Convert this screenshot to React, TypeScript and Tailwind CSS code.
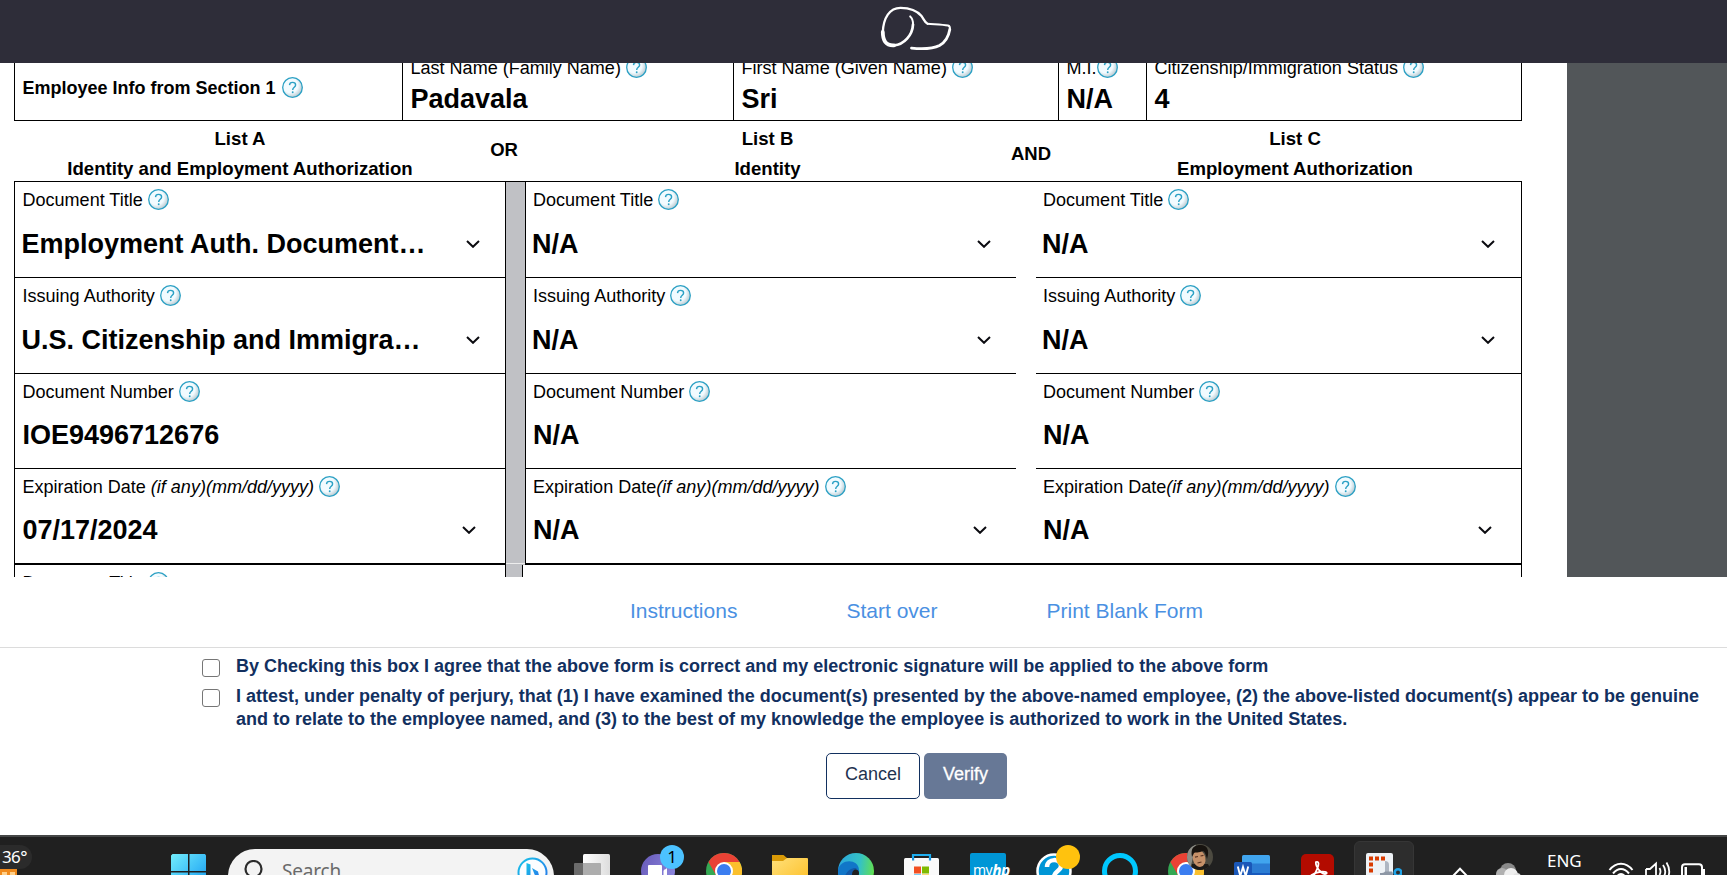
import React from "react";

const label = "text-[18.050px] leading-6 whitespace-pre";
const value = "text-[27px] font-bold leading-8 whitespace-pre";

function Help({ className = "" }: { className?: string }) {
  return (
    <svg className={`h-[21px] w-[21px] shrink-0 ${className}`} viewBox="0 0 21 21">
      <defs>
        <radialGradient id="helpFill" cx="0.4" cy="0.4" r="0.62">
          <stop offset="0.6" stopColor="#f2fbff" />
          <stop offset="1" stopColor="#b9c9d0" />
        </radialGradient>
      </defs>
      <circle cx="10.5" cy="10.5" r="9.8" fill="url(#helpFill)" stroke="#2ba0c4" strokeWidth="1.3" />
      <path d="M7.5 8.1c.1-1.7 1.300-2.700 3-2.700s3.100 1 3.100 2.600c0 2.200-2.900 2.300-2.900 4.900" fill="none" stroke="#2ba0c4" strokeWidth="1.400" />
      <circle cx="10.700" cy="15.300" r="0.95" fill="#2ba0c4" />
    </svg>
  );
}

function Chevron({ className = "" }: { className?: string }) {
  return (
    <svg className={`h-2 w-[14px] shrink-0 ${className}`} viewBox="0 0 14 8">
      <path d="M1 1l6 5.800L13 1" fill="none" stroke="#0b0b10" strokeWidth="2" />
    </svg>
  );
}

type FieldProps = {
  title: React.ReactNode;
  text?: string;
  size: string;
  arrow?: string;
  select?: boolean;
};

function Field({ title, text, size, arrow, select }: FieldProps) {
  return (
    <div className={`flex flex-col overflow-hidden border-black pt-[6px] ${size}`}>
      <div className={`flex shrink-0 items-center ${label}`}>
        <span>{title}</span>
        <Help className="ml-[5px] -mt-px" />
      </div>
      {text && (
        <div className={`flex items-center justify-between ${select ? "mt-4" : "mt-[15px]"}`}>
          <span className={`${value} ${select ? "-ml-px" : ""}`}>{text}</span>
          {arrow && <Chevron className={arrow} />}
        </div>
      )}
    </div>
  );
}

function InfoCell({ name, text, size, gap }: { name: string; text: string; size: string; gap: string }) {
  return (
    <div className={`flex flex-col justify-end border-r border-black pb-[5px] pl-[7.500px] ${size}`}>
      <div className={`flex items-center ${label}`}>
        <span>{name}</span>
        <Help className={`-mt-px ${gap}`} />
      </div>
      <div className={`mt-[3px] ${value}`}>{text}</div>
    </div>
  );
}

function ListHead({ top, bottom, size }: { top: string; bottom: string; size: string }) {
  return (
    <div className={`flex flex-col gap-[6px] pt-[6px] text-center text-[18.600px] leading-6 ${size}`}>
      <div>{top}</div>
      <div>{bottom}</div>
    </div>
  );
}

function ChromeIcon({ className }: { className: string }) {
  return (
    <svg className={`h-9 w-9 shrink-0 ${className}`} viewBox="0 0 36 36">
      <circle cx="18" cy="18" r="18" fill="#34a853" />
      <path d="M2.400 9A18 18 0 0 1 33.600 9H18L10.200 22.500z" fill="#e94235" />
      <path d="M33.600 9A18 18 0 0 1 18 36l7.800-13.500L18 9z" fill="#fbc02d" />
      <circle cx="18" cy="18" r="9" fill="#fff" />
      <circle cx="18" cy="18" r="7" fill="#3b7df0" />
    </svg>
  );
}

function Taskbar() {
  return (
    <div className="flex h-10 items-start overflow-hidden border-t-2 border-[#454747] bg-[#202020] font-['Noto_Sans',sans-serif]">
      <div className="relative mt-2 h-8 w-[33px] shrink-0">
        <svg className="absolute top-[23px] left-0 h-2 w-[18px]" viewBox="0 0 18 8">
          <path d="M0 0h17v8H0z" fill="#f08a1c" />
          <path d="M2 4h5v4H2zM10 4h5v4h-5z" fill="#ffd08a" />
        </svg>
        <div className="absolute top-0 left-0 h-6 w-8 rounded-r-full bg-[#2b2b2b] pl-[2px] text-[17px] leading-6 tracking-[-0.600px] text-white">36°</div>
      </div>
      <svg className="mt-[17px] ml-[138px] h-9 w-[35px] shrink-0" viewBox="0 0 35 36">
        <defs>
          <linearGradient id="win" x1="0" y1="0" x2="1" y2="1">
            <stop stopColor="#73eefc" />
            <stop offset="0.600" stopColor="#37b9f6" />
            <stop offset="1" stopColor="#1090e0" />
          </linearGradient>
        </defs>
        <path d="M1.500 0H17v17H0V1.500zM18.500 0H34l1 1.500V17H18.500zM0 18.500h17V36H0zM18.500 18.500H35V36H18.500z" fill="url(#win)" />
      </svg>
      <div className="mt-3 ml-[22px] flex h-[54px] w-[326px] shrink-0 items-start rounded-full bg-[#f3f3f3]">
        <svg className="mt-[11px] ml-4 h-6 w-6" viewBox="0 0 24 24">
          <circle cx="9.500" cy="9" r="8" fill="none" stroke="#2b2b2b" strokeWidth="2.200" />
        </svg>
        <span className="mt-[7px] ml-[14px] text-[19px] leading-[30px] tracking-[-0.200px] text-[#6a6a6a]">Search</span>
        <svg className="mt-2 mr-[6px] ml-auto h-[31px] w-[31px]" viewBox="0 0 31 31">
          <defs>
            <linearGradient id="bing" x1="0" y1="0" x2="1" y2="1">
              <stop stopColor="#18c3e8" />
              <stop offset="1" stopColor="#2870ea" />
            </linearGradient>
          </defs>
          <circle cx="15.500" cy="15.500" r="14" fill="#fbfdff" stroke="url(#bing)" strokeWidth="2" />
          <path d="M9.500 6l4 1.500V22l-4 3zM15 11l6 3.500 1 4-4 0z" fill="url(#bing)" />
        </svg>
      </div>
      <svg className="mt-[17px] ml-5 h-7 w-9 shrink-0" viewBox="0 0 36 28">
        <defs>
          <linearGradient id="pane"><stop stopColor="#fff" /><stop offset="1" stopColor="#ddd" /></linearGradient>
        </defs>
        <rect x="9" width="27" height="34" rx="1.500" fill="url(#pane)" />
        <path d="M0 10q0-1 1-1h8v25H0z" fill="#6b6b6b" />
        <path d="M9 9h17q1 0 1 1v24H9z" fill="#adadad" />
      </svg>
      <div className="relative mt-2 ml-[31px] h-8 w-[43px] shrink-0">
        <svg className="absolute top-2 left-0 h-[34px] w-[34px]" viewBox="0 0 34 34">
          <defs>
            <linearGradient id="chat" x1="0" y1="0" x2="1" y2="0.500"><stop stopColor="#6659b8" /><stop offset="1" stopColor="#8b84dc" /></linearGradient>
          </defs>
          <circle cx="17" cy="18" r="17" fill="url(#chat)" />
          <rect x="7" y="12" width="14" height="14" rx="1" fill="#fff" />
          <path d="M22.500 18q0-1.500 2.500-2l1-1v11h-3.500z" fill="#fff" />
        </svg>
        <div className="absolute top-0 left-[19px] h-6 w-6 rounded-full bg-[#4cc2ff] text-center text-[17px] leading-6 text-black">1</div>
      </div>
      <ChromeIcon className="mt-4 ml-[22px]" />
      <svg className="mt-[18px] ml-[30px] h-8 w-9 shrink-0" viewBox="0 0 36 32">
        <defs>
          <linearGradient id="folder" x1="0" y1="0" x2="1" y2="1"><stop stopColor="#ffe07a" /><stop offset="1" stopColor="#fdbd21" /></linearGradient>
        </defs>
        <path d="M0 0h11.500l3.500 3v8H0z" fill="#d99a06" />
        <path d="M0 6h11l4-3h20q1 0 1 1v28H0z" fill="url(#folder)" />
      </svg>
      <svg className="mt-4 ml-[30px] h-9 w-9 shrink-0" viewBox="0 0 36 36">
        <defs>
          <linearGradient id="edge" x1="0" y1="0.400" x2="1" y2="0.500"><stop stopColor="#2ba7dd" /><stop offset="0.600" stopColor="#35c2c4" /><stop offset="1" stopColor="#63e04f" /></linearGradient>
        </defs>
        <circle cx="18" cy="18" r="18" fill="url(#edge)" />
        <path d="M0 17C2 6 20 5 21 17v19H6C2 31 0 24 0 17z" fill="#1176c8" />
        <path d="M5 36c-1-14 6-22 14-21-5 3-7 12-3 21z" fill="#1458a6" />
        <path d="M14 22c0-7 7-7 7-2 0 3-2 4 0 6h-5z" fill="#202020" />
      </svg>
      <svg className="mt-[17px] ml-[30px] h-9 w-[35px] shrink-0" viewBox="0 0 35 36">
        <path d="M9 6V1h17v5" fill="none" stroke="#1eaef0" strokeWidth="2.200" />
        <path d="M0 5.500Q0 4 1.500 4h32Q35 4 35 5.500V36H0z" fill="#fafafa" />
        <path d="M8 4h2.200v2.500H8zM24.900 4h2.200v2.500h-2.200z" fill="#1490df" />
        <path d="M10 12.500h7v7h-7z" fill="#f25022" />
        <path d="M18 12.500h7v7h-7z" fill="#7fba00" />
        <path d="M10 20.500h7v7h-7z" fill="#00a4ef" />
        <path d="M18 20.500h7v7h-7z" fill="#ffb900" />
      </svg>
      <div className="mt-4 ml-[31px] flex h-9 w-9 shrink-0 items-start rounded-[2px] bg-[#0096d6] pt-[7px] pl-[3px] text-[14px] leading-5 tracking-[-0.500px] text-white">
        my<b className="text-[15.500px] italic">hp</b>
      </div>
      <div className="relative mt-2 ml-[30px] h-8 w-[44px] shrink-0">
        <svg className="absolute top-2 left-0 h-9 w-9" viewBox="0 0 36 36">
          <circle cx="18" cy="18" r="16.500" fill="#0096d6" stroke="#fff" strokeWidth="2.500" />
          <path d="M11 14c0-9 14-9 14-1 0 5-7 5-7 11" fill="none" stroke="#fff" strokeWidth="4.500" />
        </svg>
        <div className="absolute top-0 left-5 h-6 w-6 rounded-full bg-[#ffc20e]" />
      </div>
      <div className="mt-4 ml-[22px] h-9 w-9 shrink-0 rounded-full border-[5px] border-[#00c8ff]" />
      <div className="relative mt-2 ml-[30px] h-8 w-[45px] shrink-0">
        <ChromeIcon className="absolute top-2 left-0" />
        <svg className="absolute -top-px left-[19px] h-[26px] w-[26px]" viewBox="0 0 26 26">
          <clipPath id="face"><circle cx="13" cy="13" r="13" /></clipPath>
          <g clipPath="url(#face)">
            <path d="M0 0h26v26H0z" fill="#4c4a40" />
            <path d="M0 0h9L3 26H0z" fill="#8f8f88" />
            <path d="M5 20h16l3 6H4z" fill="#1c1a18" />
            <ellipse cx="12" cy="14.500" rx="6.300" ry="8.500" fill="#c69169" transform="rotate(-12 12 14)" />
            <path d="M5 13C3 3 8 1 14 1s9 5 6 14c-1-4-2-7-4-8-4 2-8 1-9 2z" fill="#17130f" />
            <path d="M8 13.200l3-.700M13.500 12l3-.700M10.500 19l4-1" stroke="#5b3322" strokeWidth="1.200" />
          </g>
        </svg>
      </div>
      <svg className="mt-[18px] ml-[21px] h-8 w-9 shrink-0" viewBox="0 0 36 32">
        <path d="M8 1.500Q8 0 9.500 0h25Q36 0 36 1.500V9H8z" fill="#41a5ee" />
        <path d="M8 8.500h28V18H8z" fill="#2b7cd3" />
        <path d="M8 18h28v14H8z" fill="#185abd" />
        <rect y="7" width="18" height="18" rx="1.500" fill="#1a57b8" />
        <path d="M3.800 11.500L6.300 21 9 12l2.700 9 2.500-9.500" fill="none" stroke="#fff" strokeWidth="1.900" />
      </svg>
      <svg className="mt-[17px] ml-[31px] h-8 w-[33px] shrink-0" viewBox="0 0 33 32">
        <rect width="33" height="33" rx="5" fill="#b30b00" />
        <path d="M15 8c3-1 3 2 1.500 6C14.500 19 12 24 9.500 24c-3-1 3-5 9-6 4-.700 8 0 7 1.500-3 2-8-3-10-7.500-.700-2-.700-3.500-.500-4z" fill="none" stroke="#fff" strokeWidth="1.800" />
      </svg>
      <div className="mt-1 ml-5 flex h-[60px] w-[60px] shrink-0 rounded-[6px] border border-[#363636] bg-[#2d2d2d] pt-[11px] pl-[11px]">
        <svg className="h-9 w-9" viewBox="0 0 36 36">
          <rect width="27" height="34" rx="2" fill="#eef2f6" />
          <path d="M3 3.500h4v4H3zM9 3.500h4v4H9zM15 3.500h4v4h-4zM3 9.500h4v4H3zM3 15.500h4v4H3z" fill="#d83b01" />
          <path d="M19 20V8q4 0 4 4v10h-4z" fill="#aeb6c2" />
          <path d="M14 20q4 0 5-1.500h7q1 1 1 4H14z" fill="#8d97a5" />
          <circle cx="32" cy="19.500" r="3.300" fill="none" stroke="#1fa3e8" strokeWidth="2.600" />
        </svg>
      </div>
      <svg className="mt-[30px] ml-[37px] h-3 w-[18px] shrink-0" viewBox="0 0 18 12">
        <path d="M1.500 9.500L9 1.800l7.500 7.700" fill="none" stroke="#fff" strokeWidth="2" />
      </svg>
      <svg className="mt-[26px] ml-[27px] h-4 w-[25px] shrink-0" viewBox="0 0 25 16">
        <circle cx="12" cy="8" r="8" fill="#8a8a8a" />
        <circle cx="6" cy="11" r="6" fill="#b0b0b0" />
        <circle cx="15" cy="12" r="7" fill="#eee" />
        <circle cx="21" cy="14" r="4" fill="#e2e2e2" />
      </svg>
      <span className="mt-[12px] ml-[26px] w-9 shrink-0 text-[17px] leading-6 text-white">ENG</span>
      <svg className="mt-[24px] ml-[25px] h-5 w-[26px] shrink-0" viewBox="0 0 26 20" fill="none" stroke="#fff" strokeWidth="2">
        <path d="M1.500 9C8 .500 18 .500 24.500 9M5 12.500c5-6 11-6 16 0M8.500 16c3-4 6-4 9 0" />
      </svg>
      <svg className="mt-[23px] ml-[11px] h-5 w-[26px] shrink-0" viewBox="0 0 26 20" fill="none" stroke="#fff" strokeWidth="1.800">
        <path d="M1 9h4l6-5.500V22M1 9v8M14.500 8q2 3.500 0 7M18 5q4.500 6.500 0 13M21.500 2.500q5.500 9 0 18" />
      </svg>
      <svg className="mt-[26px] ml-[10px] h-5 w-[26px] shrink-0" viewBox="0 0 26 20">
        <rect x="1" y="1.200" width="20" height="15" rx="3" fill="none" stroke="#fff" strokeWidth="2" />
        <path d="M3.500 4H6v12H3.500zM22 6h2v6h-2z" fill="#fff" />
      </svg>
    </div>
  );
}

export default function App() {
  const anyDate = <i>(if any)(mm/dd/yyyy)</i>;
  return (
    <div className="flex h-[875px] w-[1727px] flex-col overflow-hidden bg-white font-['Liberation_Sans',Arial,sans-serif] text-black">
      <header className="flex h-[63px] shrink-0 bg-[#2e2d39] pl-[880px]">
        <svg className="h-[63px] w-[72px]" viewBox="0 0 72 63" fill="none" stroke="#fff" strokeLinecap="round" strokeLinejoin="round">
          <path strokeWidth="2.300" d="M2.800 32C3.500 18 9.500 7.800 20.500 7.800C29 7.800 37 10.500 41.500 16C43.800 19 44.500 22.500 47.500 23.700" />
          <path strokeWidth="3.800" d="M2.800 32C2.800 40 5.500 45.800 14 45.300" />
          <path strokeWidth="2.700" d="M14 45.300C24 45 32.500 35 33 24.500" />
          <path strokeWidth="2" d="M33 24.500C33.200 20.500 32 18 30.200 16.400" />
          <path strokeWidth="1.900" d="M47.500 23.700C54 24.300 62 24.500 68 25.500C70.300 26 70.200 27.500 69.800 29.500" />
          <path strokeWidth="2.800" d="M69.800 29.500C68.500 37 65 42.500 59.500 45.500C51 49.800 40 49 31.500 48.200" />
        </svg>
      </header>

      <main className="flex h-[514px] shrink-0 overflow-hidden">
        <div className="flex w-[1567px] shrink-0 flex-col pl-[14px]">
          <section className="flex h-[58px] w-[1508px] shrink-0 overflow-hidden border-b border-l border-black">
            <div className="flex w-[388px] items-start border-r border-black pt-[13px] pl-[7.500px] text-[18px] leading-6 font-bold">
              <span>Employee Info from Section 1</span>
              <Help className="mt-[1px] ml-[6px]" />
            </div>
            <InfoCell name="Last Name (Family Name)" text="Padavala" size="w-[331px]" gap="ml-[5px]" />
            <InfoCell name="First Name (Given Name)" text="Sri" size="w-[325px]" gap="ml-[5px]" />
            <InfoCell name="M.I." text="N/A" size="w-[88px]" gap="ml-0" />
            <InfoCell name="Citizenship/Immigration Status" text="4" size="w-[375px]" gap="ml-[5px]" />
          </section>

          <section className="flex h-[60px] w-[1508px] shrink-0 font-bold">
            <ListHead top="List A" bottom="Identity and Employment Authorization" size="w-[452px]" />
            <div className="w-[76px] pt-[17px] text-center text-[18.500px] leading-6">OR</div>
            <ListHead top="List B" bottom="Identity" size="w-[451px]" />
            <div className="w-[76px] pt-[21px] text-center text-[18.500px] leading-6">AND</div>
            <ListHead top="List C" bottom="Employment Authorization" size="w-[452px]" />
          </section>

          <section className="flex h-[384px] w-[1508px] shrink-0 border-x border-t border-black">
            <div className="w-[491px] border-r border-black">
              <Field size="h-24 border-b pl-[7.500px]" title="Document Title" text="Employment Auth. Document…" arrow="mr-[25px]" select />
              <Field size="h-24 border-b pl-[7.500px]" title="Issuing Authority" text="U.S. Citizenship and Immigra…" arrow="mr-[25px]" select />
              <Field size="h-[95px] border-b pl-[7.500px]" title="Document Number" text="IOE9496712676" />
              <Field size="h-24 border-b-2 pl-[7.500px]" title={<>Expiration Date {anyDate}</>} text="07/17/2024" arrow="mr-[29px]" />
            </div>
            <div className="flex w-[20px] flex-col border-r border-black bg-[#c0c1c5]">
              <div className="mt-auto h-px bg-[#ededed]" />
              <div className="h-px" />
            </div>
            <div className="w-[510px]">
              <Field size="mr-5 h-24 border-b pl-[7px]" title="Document Title" text="N/A" arrow="mr-[25px]" select />
              <Field size="mr-5 h-24 border-b pl-[7px]" title="Issuing Authority" text="N/A" arrow="mr-[25px]" select />
              <Field size="mr-5 h-[95px] border-b pl-[7px]" title="Document Number" text="N/A" />
              <Field size="h-24 border-b-2 pl-[7px]" title={<>Expiration Date{anyDate}</>} text="N/A" arrow="mr-[49px]" />
            </div>
            <div className="w-[485px]">
              <Field size="h-24 border-b pl-[7px]" title="Document Title" text="N/A" arrow="mr-[26px]" select />
              <Field size="h-24 border-b pl-[7px]" title="Issuing Authority" text="N/A" arrow="mr-[26px]" select />
              <Field size="h-[95px] border-b pl-[7px]" title="Document Number" text="N/A" />
              <Field size="h-24 border-b-2 pl-[7px]" title={<>Expiration Date{anyDate}</>} text="N/A" arrow="mr-[29px]" />
            </div>
          </section>

          <section className="flex h-3 w-[1508px] shrink-0 overflow-hidden border-x border-black">
            <div className="w-[491px] border-r border-black">
              <Field size="h-24 pl-[7.500px]" title="Document Title" />
            </div>
            <div className="w-[17px] border-r border-black bg-[#c0c1c5]" />
          </section>
        </div>
        <aside className="flex-1 bg-[#525659]" />
      </main>

      <nav className="flex h-[71px] shrink-0 border-b border-[#dcdcdc] pt-[20px] pl-[630px] text-[21px] leading-7 text-[#4a90e2]">
        <a className="w-[216.500px]">Instructions</a>
        <a className="w-[200px]">Start over</a>
        <a>Print Blank Form</a>
      </nav>

      <form className="flex h-[187px] shrink-0 flex-col pl-[202px] text-[18px] text-[#12305f]">
        <label className="mt-[7px] flex h-[29px] items-start font-bold">
          <span className="mt-[4px] h-[18px] w-[18px] shrink-0 rounded-[3px] border-[1.500px] border-[#767676] bg-white" />
          <span className="ml-4 whitespace-nowrap leading-[23px]">
            By Checking this box I agree that the above form is correct and my electronic signature will be applied to the above form
          </span>
        </label>
        <label className="mt-[1px] flex items-start font-bold">
          <span className="mt-[4px] h-[18px] w-[18px] shrink-0 rounded-[3px] border-[1.500px] border-[#767676] bg-white" />
          <span className="ml-4 whitespace-nowrap leading-[23px]">
            I attest, under penalty of perjury, that (1) I have examined the document(s) presented by the above-named employee, (2) the above-listed document(s) appear to be genuine
            <br />
            and to relate to the employee named, and (3) to the best of my knowledge the employee is authorized to work in the United States.
          </span>
        </label>
        <div className="mt-[22px] ml-[624px] flex gap-1">
          <button type="button" className="h-[46px] w-[94px] rounded-[5px] border border-[#12305f] pb-[3px] text-[#1f3350]">Cancel</button>
          <button type="button" className="h-[46px] w-[83px] rounded-[5px] bg-[#677896] pb-[3px] text-white [-webkit-text-stroke:0.300px_white]">Verify</button>
        </div>
      </form>

      <Taskbar />
    </div>
  );
}
